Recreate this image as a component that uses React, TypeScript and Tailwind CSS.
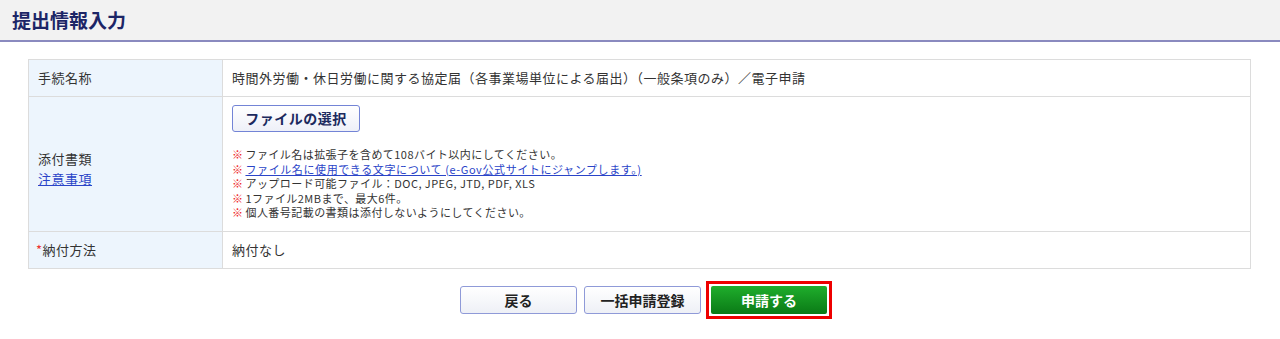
import React from "react";

const notes: { text: string; link?: boolean }[] = [
  { text: "ファイル名は拡張子を含めて108バイト以内にしてください。" },
  { text: "ファイル名に使用できる文字について (e-Gov公式サイトにジャンプします。)", link: true },
  { text: "アップロード可能ファイル：DOC, JPEG, JTD, PDF, XLS" },
  { text: "1ファイル2MBまで、最大6件。" },
  { text: "個人番号記載の書類は添付しないようにしてください。" },
];

const font = { fontFamily: '"Noto Sans CJK JP", "Noto Sans", sans-serif' };

export default function App() {
  return (
    <div className="w-[1280px] h-[339px] bg-white text-[#333]" style={font}>
      <div className="h-[42px] bg-[#f2f2f2] border-b-2 border-[#8a8abf] flex items-center px-3">
        <h1 className="text-[19px] font-bold text-[#1c2566]">提出情報入力</h1>
      </div>

      <div className="pt-[17px] px-[28px] pr-[29px]">
        <div className="border border-[#dcdcdc] text-[13px] tracking-[0.5px]">
          <div className="flex h-[37px] border-b border-[#dcdcdc]">
            <div className="w-[194px] bg-[#edf5fd] border-r border-[#dcdcdc] flex items-center px-[9px]">
              手続名称
            </div>
            <div className="flex-1 flex items-center px-[9px]">
              時間外労働・休日労働に関する協定届（各事業場単位による届出）（一般条項のみ）／電子申請
            </div>
          </div>

          <div className="flex h-[135px] border-b border-[#dcdcdc]">
            <div className="w-[194px] bg-[#edf5fd] border-r border-[#dcdcdc] flex flex-col justify-center px-[9px] pt-[10px] leading-[20px]">
              <span>添付書類</span>
              <a className="text-[#2a44c8] underline">注意事項</a>
            </div>
            <div className="flex-1 pl-[9px] pt-[8px]">
              <button className="h-[27px] w-[128px] rounded-[3px] border border-[#7384d6] bg-gradient-to-b from-white to-[#eef0f8] text-[14px] font-bold text-[#1c2a5e]">
                ファイルの選択
              </button>
              <ul className="mt-[15px] text-[11px] leading-[14.5px] tracking-[0.45px]">
                {notes.map((n, i) => (
                  <li key={i} className="flex h-[14.5px]">
                    <span className="inline-block h-[14.5px] text-[#ee2222] mr-[2px]">※</span>
                    <span
                      className={
                        n.link
                          ? "inline-block h-[14.5px] text-[#2a44c8] underline tracking-[0.6px]"
                          : "inline-block h-[14.5px]"
                      }
                    >
                      {n.text}
                    </span>
                  </li>
                ))}
              </ul>
            </div>
          </div>

          <div className="flex h-[36px]">
            <div className="w-[194px] bg-[#edf5fd] border-r border-[#dcdcdc] flex items-center px-[7px]">
              <span className="text-[#ee3333]">*</span>納付方法
            </div>
            <div className="flex-1 flex items-center px-[9px]">納付なし</div>
          </div>
        </div>
      </div>

      <div className="flex justify-center items-center gap-[7px] mt-[12px] pl-[12px]">
        <button className="h-[28px] w-[117px] rounded-[3px] border border-[#8f9ad8] bg-gradient-to-b from-white to-[#eef0f6] text-[14px] font-bold text-[#222]">
          戻る
        </button>
        <button className="h-[28px] w-[117px] rounded-[3px] border border-[#8f9ad8] bg-gradient-to-b from-white to-[#eef0f6] text-[14px] font-bold text-[#222]">
          一括申請登録
        </button>
        <div className="border-[3px] border-[#ee0000] p-[2px] ml-[-2px]">
          <button className="h-[28px] w-[116px] rounded-[2px] bg-gradient-to-b from-[#1fae2c] to-[#0a7a16] text-[14px] font-bold text-white">
            申請する
          </button>
        </div>
      </div>
    </div>
  );
}
